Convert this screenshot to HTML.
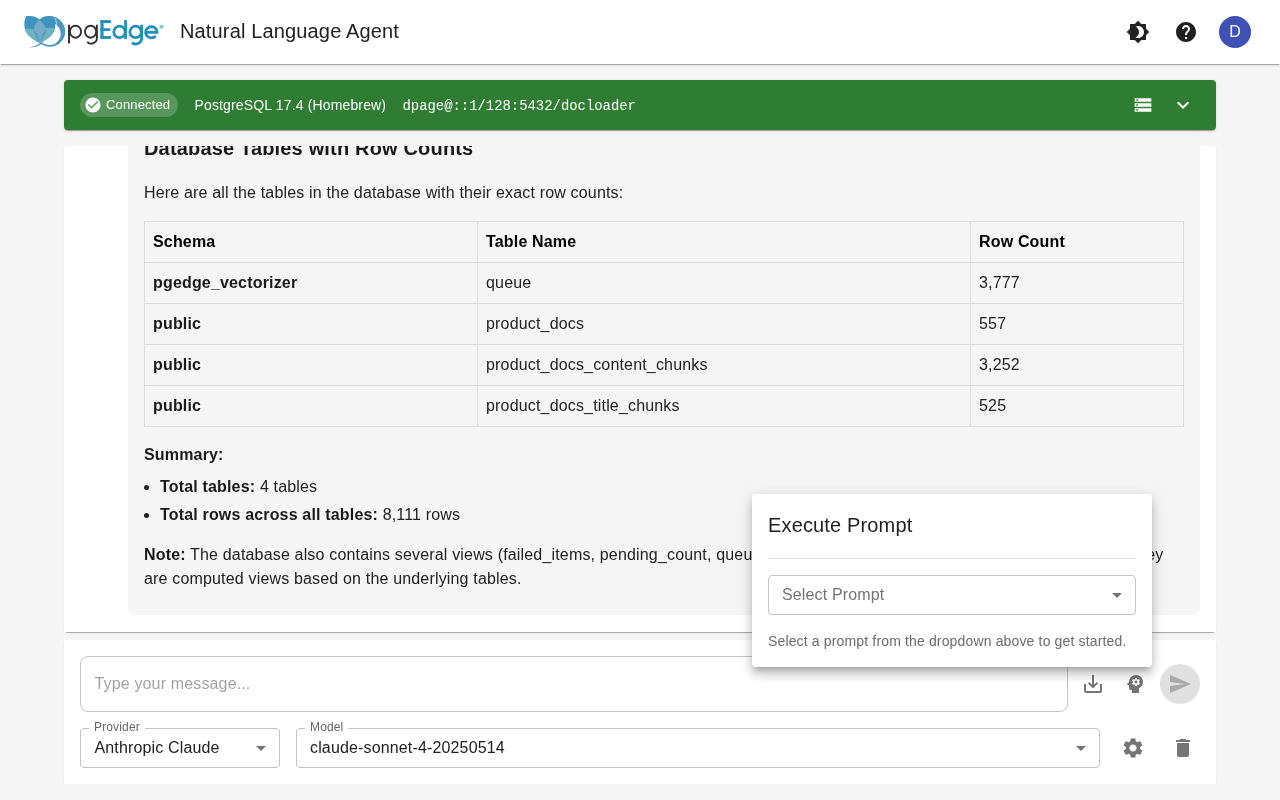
<!DOCTYPE html>
<html><head><meta charset="utf-8">
<style>
*{box-sizing:border-box;margin:0;padding:0}
html,body{width:1280px;height:800px;overflow:hidden}
body{background:#f5f5f5;font-family:"Liberation Sans",sans-serif;position:relative;color:rgba(0,0,0,0.87)}
.abs{position:absolute}
svg{display:block}
#hdr{left:0;top:0;width:1280px;height:64px;background:#fff;box-shadow:0px 2px 1px -1px rgba(0,0,0,0.17),0px 1px 1px 0px rgba(0,0,0,0.12),0px 1px 3px 0px rgba(0,0,0,0.1);z-index:5}
#title{letter-spacing:0.15px;left:180px;top:19px;font-size:20px;line-height:24px;color:#212121;white-space:nowrap}
#avatar{left:1219px;top:16px;width:32px;height:32px;border-radius:50%;background:#3f51b5;color:#fff;font-size:16px;line-height:32px;text-align:center}
#conn{left:64px;top:80px;width:1152px;height:50px;background:#2e7d32;border-radius:4px;box-shadow:0px 2px 1px -1px rgba(0,0,0,0.2),0px 1px 1px 0px rgba(0,0,0,0.14),0px 1px 3px 0px rgba(0,0,0,0.12)}
#chip{left:16px;top:13px;width:98px;height:24px;border-radius:12px;background:rgba(255,255,255,0.2)}
#chiptxt{letter-spacing:0.15px;left:26px;top:0;font-size:13px;line-height:24px;color:#fff;white-space:nowrap}
#pgver{letter-spacing:0.15px;left:130.5px;top:16px;font-size:14px;line-height:18px;color:#fff;white-space:nowrap}
#dsn{left:338.5px;top:17px;font-family:"Liberation Mono",monospace;font-size:13.9px;line-height:18px;color:#fff;white-space:nowrap}
.paper{background:#fff;border-radius:4px;box-shadow:0px 2px 1px -1px rgba(0,0,0,0.2),0px 1px 1px 0px rgba(0,0,0,0.14),0px 1px 3px 0px rgba(0,0,0,0.05)}
#chat{left:64px;top:146px;width:1152px;height:486px}
#clip{left:0;top:0;width:1152px;height:486px;overflow:hidden;background:#fff;border-radius:4px 4px 0 0}
#bubble{left:64px;top:-60px;width:1072px;height:529px;background:#f5f5f5;border-radius:8px}
.md{color:#222;font-size:16px;white-space:nowrap;letter-spacing:0.17px}
#h3{left:80px;top:-10px;font-size:20px;font-weight:bold;line-height:24px;color:#1a1a1a}
#p1{left:80px;top:34.5px;line-height:24px}
table{position:absolute;left:80px;top:75px;border-collapse:collapse;font-size:16px;color:#222;letter-spacing:0.17px;table-layout:fixed;width:1039px}
td,th{border:1px solid #dcdcdc;padding:8px 8px;height:41px;line-height:24px;text-align:left;white-space:nowrap;vertical-align:middle}
th{color:#000;font-weight:bold}
td.b{font-weight:bold;color:#1a1a1a}
#sum{left:80px;top:296.5px;line-height:24px;font-weight:bold;color:#1a1a1a}
.li{left:96px;line-height:24px}
.li b{color:#1a1a1a}
.dot{position:absolute;left:-16.5px;top:10px;width:5px;height:5px;border-radius:50%;background:#222}
#note{left:80px;top:396.5px;line-height:24px}
#input{left:64px;top:640px;width:1152px;height:144px}
#tf{left:16px;top:16px;width:988px;height:56px;border:1px solid #c4c4c4;border-radius:8px}
#ph{letter-spacing:0.15px;left:13.5px;top:17px;font-size:16px;line-height:20px;color:#a2a2a2;white-space:nowrap}
#send{left:1096px;top:24px;width:40px;height:40px;border-radius:50%;background:#e0e0e0}
.sel{border:1px solid #c4c4c4;border-radius:4px}
.lbl{letter-spacing:0.15px;font-size:12px;line-height:14px;color:#666;background:#fff;padding:0 5px;white-space:nowrap}
.val{letter-spacing:0.15px;font-size:16px;line-height:20px;color:#212121;white-space:nowrap}
#pop{left:752px;top:494px;width:400px;height:173px;background:#fff;border-radius:4px;box-shadow:0px 5px 5px -3px rgba(0,0,0,0.2),0px 8px 10px 1px rgba(0,0,0,0.14),0px 3px 14px 2px rgba(0,0,0,0.12);z-index:10}
#poptitle{letter-spacing:0.15px;left:16px;top:19px;font-size:20px;line-height:24px;color:#212121;white-space:nowrap}
#popdiv{left:16px;top:64px;width:368px;height:1px;background:#e0e0e0}
#popsel{left:16px;top:81px;width:368px;height:40px}
#popph{letter-spacing:0.15px;left:13px;top:9px;font-size:16px;line-height:20px;color:#737373;white-space:nowrap}
#helper{letter-spacing:0.15px;left:16px;top:138px;font-size:14px;line-height:18px;color:#6b6b6b;white-space:nowrap}
.gs{will-change:transform}</style></head><body><div class="gs" style="position:absolute;left:0;top:0;width:1280px;height:800px">

<div id="hdr" class="abs">
  <!-- logo mark -->
  <svg class="abs" style="left:22px;top:14px" width="48" height="36" viewBox="0 0 1067 800">
    <defs>
      <clipPath id="heart"><path d="M390 120 C320 50 180 30 95 50 C40 130 40 300 90 400 C160 520 300 600 400 650 C500 600 620 530 690 430 C750 330 760 150 700 60 C600 30 460 50 390 120 Z"/></clipPath>
      <clipPath id="rightside"><rect x="390" y="0" width="700" height="800"/></clipPath>
    </defs>
    <g clip-path="url(#rightside)">
      <path fill="#4a98c3" fill-rule="evenodd" d="M960 390 A340 340 0 1 1 280 390 A340 340 0 1 1 960 390 Z M860 440 A250 250 0 1 0 360 440 A250 250 0 1 0 860 440 Z"/>
    </g>
    <path fill="#4a98c3" d="M420 640 C330 700 250 730 160 745 C260 745 360 720 440 660 Z"/>
    <path fill="#3e94bf" d="M390 120 C320 50 180 30 95 50 C40 130 40 300 90 400 C160 520 300 600 400 650 C500 600 620 530 690 430 C750 330 760 150 700 60 C600 30 460 50 390 120 Z"/>
    <g clip-path="url(#heart)">
      <path fill="#6db5bc" d="M0 340 C120 320 220 320 300 340 C360 330 420 330 480 320 C560 300 660 300 800 330 L800 800 L0 800 Z"/>
      <path fill="#589dbc" d="M245 335 C270 450 330 570 400 650 C470 570 530 450 545 325 C480 320 420 330 400 330 C350 330 300 330 245 335 Z"/>
      <path fill="#74a9c9" d="M390 125 C330 190 260 260 265 330 C270 400 360 440 375 520 L382 640 L422 640 L430 520 C445 440 520 400 520 330 C520 260 450 190 390 125 Z"/>
    </g>
    <path fill="none" stroke="#e8f2f8" stroke-width="14" d="M720 80 C770 150 790 260 745 340"/>
  </svg>
  <!-- wordmark -->
  <svg class="abs" style="left:0;top:0" width="180" height="64" viewBox="0 0 180 64">
    <g fill="none" stroke="#2f2f2f" stroke-width="1.9">
      <path d="M69 24.8 V43.6"/>
      <ellipse cx="75.5" cy="31.7" rx="5.6" ry="6.0"/>
      <ellipse cx="90.6" cy="31.7" rx="5.6" ry="6.0"/>
      <path d="M96.9 24.8 V38 A5.6 5.6 0 0 1 87.2 41.8"/>
    </g>
    <g fill="#2290bd">
      <rect x="100.4" y="20.1" width="3.2" height="18.8"/>
      <rect x="100.4" y="20.1" width="10.5" height="3"/>
      <rect x="100.4" y="28.2" width="9.8" height="2.8"/>
      <rect x="100.4" y="36" width="10.6" height="2.9"/>
      <rect x="124.1" y="20" width="2.8" height="19"/>
    </g>
    <g fill="none" stroke="#2290bd" stroke-width="2.8">
      <circle cx="119.5" cy="31.9" r="5.7"/>
      <circle cx="135.6" cy="31.9" r="5.7"/>
      <path d="M141.6 24.7 V38.5 A5.8 5.8 0 0 1 132 42.6"/>
      <path d="M146.2 32.3 H157 A5.7 5.7 0 1 0 155.6 36"/>
    </g>
    <circle cx="161.6" cy="26.8" r="2.1" fill="#8cc3dc"/>
  </svg>
  <div id="title" class="abs">Natural Language Agent</div>
  <!-- brightness -->
  <svg class="abs" style="left:1126px;top:20px" width="24" height="24" viewBox="0 0 24 24"><path fill="#212121" d="M20 8.69V4h-4.69L12 .69 8.69 4H4v4.69L.69 12 4 15.31V20h4.69L12 23.31 15.31 20H20v-4.69L23.31 12 20 8.69zM12 18c-.89 0-1.74-.2-2.5-.55C11.56 16.5 13 14.42 13 12s-1.44-4.5-3.5-5.45C10.26 6.2 11.11 6 12 6c3.31 0 6 2.69 6 6s-2.69 6-6 6z"/></svg>
  <!-- help -->
  <svg class="abs" style="left:1174px;top:20px" width="24" height="24" viewBox="0 0 24 24"><path fill="#212121" d="M12 2C6.48 2 2 6.48 2 12s4.48 10 10 10 10-4.48 10-10S17.52 2 12 2zm1 17h-2v-2h2v2zm2.07-7.75-.9.92C13.45 12.9 13 13.5 13 15h-2v-.5c0-1.1.45-2.1 1.17-2.83l1.24-1.26c.37-.36.59-.86.59-1.41 0-1.1-.9-2-2-2s-2 .9-2 2H8c0-2.21 1.79-4 4-4s4 1.79 4 4c0 .88-.36 1.68-.93 2.25z"/></svg>
  <div id="avatar" class="abs">D</div>
</div>

<div id="conn" class="abs">
  <div id="chip" class="abs">
    <svg class="abs" style="left:4px;top:3px" width="18" height="18" viewBox="0 0 24 24"><path fill="#fff" d="M12 2C6.48 2 2 6.48 2 12s4.48 10 10 10 10-4.48 10-10S17.52 2 12 2zm-2 15-5-5 1.41-1.41L10 14.17l7.59-7.59L19 8l-9 9z"/></svg>
    <div id="chiptxt" class="abs">Connected</div>
  </div>
  <div id="pgver" class="abs">PostgreSQL 17.4 (Homebrew)</div>
  <div id="dsn" class="abs">dpage@::1/128:5432/docloader</div>
  <svg class="abs" style="left:1069px;top:15px" width="20" height="20" viewBox="0 0 24 24"><path fill="#fff" d="M2 20h20v-4H2v4zm2-3h2v2H4v-2zM2 4v4h20V4H2zm4 3H4V5h2v2zm-4 7h20v-4H2v4zm2-3h2v2H4v-2z"/></svg>
  <svg class="abs" style="left:1107px;top:13px" width="24" height="24" viewBox="0 0 24 24"><path fill="#fff" d="M16.59 8.59 12 13.17 7.41 8.59 6 10l6 6 6-6z"/></svg>
</div>

<div id="chat" class="abs paper"><div id="clip" class="abs">
  <div id="bubble" class="abs"></div>
  <div id="h3" class="abs md">Database Tables with Row Counts</div>
  <div id="p1" class="abs md">Here are all the tables in the database with their exact row counts:</div>
  <table>
    <colgroup><col style="width:333px"><col style="width:493px"><col style="width:213px"></colgroup>
    <tr><th>Schema</th><th>Table Name</th><th>Row Count</th></tr>
    <tr><td class="b">pgedge_vectorizer</td><td>queue</td><td>3,777</td></tr>
    <tr><td class="b">public</td><td>product_docs</td><td>557</td></tr>
    <tr><td class="b">public</td><td>product_docs_content_chunks</td><td>3,252</td></tr>
    <tr><td class="b">public</td><td>product_docs_title_chunks</td><td>525</td></tr>
  </table>
  <div id="sum" class="abs md">Summary:</div>
  <div class="abs md li" style="top:329px"><span class="dot"></span><b>Total tables:</b> 4 tables</div>
  <div class="abs md li" style="top:357px"><span class="dot"></span><b>Total rows across all tables:</b> 8,111 rows</div>
  <div id="note" class="abs md"><b style="color:#1a1a1a">Note:</b> The database also contains several views (failed_items, pending_count, queue_status) that are not included in the totals because they<br>are computed views based on the underlying tables.</div>
</div></div>

<div id="input" class="abs paper">
  <div class="abs" style="left:0;top:0;width:1152px;height:144px;background:#fff"></div>
  <div id="tf" class="abs"><div id="ph" class="abs">Type your message...</div></div>
  <svg class="abs" style="left:1017px;top:32px" width="24" height="24" viewBox="0 0 24 24"><path fill="#757575" d="M19 12v7H5v-7H3v7c0 1.1.9 2 2 2h14c1.1 0 2-.9 2-2v-7h-2zm-6 .67 2.59-2.58L17 11.5l-5 5-5-5 1.41-1.41L11 12.67V3h2z"/></svg>
  <svg class="abs" style="left:1059px;top:32px" width="24" height="24" viewBox="0 0 24 24"><path fill="#757575" d="M13 8.57c-.79 0-1.43.64-1.43 1.43s.64 1.43 1.43 1.43 1.43-.64 1.43-1.43-.64-1.43-1.43-1.43z"/><path fill="#757575" d="M13 3C9.25 3 6.19 5.95 6.02 9.66L4.1 12.22c-.25.33-.01.78.4.78H6v3c0 1.1.9 2 2 2h1v3h7v-4.68c2.36-1.12 4-3.53 4-6.32 0-3.87-3.13-7-7-7zm3 7c0 .13-.01.26-.02.39l.83.66c.08.06.1.16.05.25l-.8 1.39c-.05.09-.16.12-.24.09l-.99-.4c-.21.16-.43.29-.67.39L14 13.83c-.01.1-.1.17-.2.17h-1.6c-.1 0-.18-.07-.2-.17l-.15-1.06c-.25-.1-.47-.23-.68-.39l-.99.4c-.09.03-.2 0-.25-.09l-.8-1.39c-.05-.08-.03-.19.05-.25l.84-.66c-.01-.13-.02-.26-.02-.39s.02-.27.04-.39l-.85-.66c-.08-.06-.1-.16-.05-.26l.8-1.38c.05-.09.15-.12.24-.09l1 .4c.2-.15.43-.29.67-.39L12 6.17c.02-.1.1-.17.2-.17h1.6c.1 0 .18.07.2.17l.15 1.06c.24.1.46.23.67.39l1-.4c.09-.03.2 0 .24.09l.8 1.38c.05.09.03.2-.05.26l-.85.66c.03.12.04.25.04.39z"/></svg>
  <div id="send" class="abs">
    <svg class="abs" style="left:8px;top:8px" width="24" height="24" viewBox="0 0 24 24"><path fill="#a9a9a9" d="M2.01 21 23 12 2.01 3 2 10l15 2-15 2z"/></svg>
  </div>
  <!-- provider -->
  <div class="abs sel" style="left:16px;top:88px;width:200px;height:40px">
    <div class="abs val" style="left:13.5px;top:9px">Anthropic Claude</div>
    <svg class="abs" style="left:168px;top:7px" width="24" height="24" viewBox="0 0 24 24"><path fill="#757575" d="M7 10l5 5 5-5z"/></svg>
  </div>
  <div class="abs lbl" style="left:25px;top:80px">Provider</div>
  <!-- model -->
  <div class="abs sel" style="left:232px;top:88px;width:804px;height:40px">
    <div class="abs val" style="left:13px;top:9px">claude-sonnet-4-20250514</div>
    <svg class="abs" style="left:772px;top:7px" width="24" height="24" viewBox="0 0 24 24"><path fill="#757575" d="M7 10l5 5 5-5z"/></svg>
  </div>
  <div class="abs lbl" style="left:241px;top:80px">Model</div>
  <svg class="abs" style="left:1057px;top:96px" width="24" height="24" viewBox="0 0 24 24"><path fill="#757575" d="M19.14 12.94c.04-.3.06-.61.06-.94 0-.32-.02-.64-.07-.94l2.03-1.58c.18-.14.23-.41.12-.61l-1.92-3.32c-.12-.22-.37-.29-.59-.22l-2.39.96c-.5-.38-1.03-.7-1.62-.94l-.36-2.54c-.04-.24-.24-.41-.48-.41h-3.84c-.24 0-.43.17-.47.41l-.36 2.54c-.59.24-1.13.57-1.62.94l-2.39-.96c-.22-.08-.47 0-.59.22L2.74 8.87c-.12.21-.08.47.12.61l2.03 1.58c-.05.3-.09.63-.09.94s.02.64.07.94l-2.03 1.58c-.18.14-.23.41-.12.61l1.92 3.32c.12.22.37.29.59.22l2.39-.96c.5.38 1.03.7 1.62.94l.36 2.54c.05.24.24.41.48.41h3.84c.24 0 .44-.17.47-.41l.36-2.54c.59-.24 1.13-.56 1.62-.94l2.39.96c.22.08.47 0 .59-.22l1.92-3.32c.12-.22.07-.47-.12-.61l-2.01-1.58zM12 15.6c-1.98 0-3.6-1.62-3.6-3.6s1.62-3.6 3.6-3.6 3.6 1.62 3.6 3.6-1.62 3.6-3.6 3.6z"/></svg>
  <svg class="abs" style="left:1107px;top:96px" width="24" height="24" viewBox="0 0 24 24"><path fill="#757575" d="M6 19c0 1.1.9 2 2 2h8c1.1 0 2-.9 2-2V7H6v12zM19 4h-3.5l-1-1h-5l-1 1H5v2h14V4z"/></svg>
</div>

<div class="abs" style="left:0;top:784px;width:1280px;height:16px;background:#f5f5f5;z-index:4"></div>
<div id="pop" class="abs">
  <div id="poptitle" class="abs">Execute Prompt</div>
  <div id="popdiv" class="abs"></div>
  <div id="popsel" class="abs sel">
    <div id="popph" class="abs">Select Prompt</div>
    <svg class="abs" style="left:336px;top:7px" width="24" height="24" viewBox="0 0 24 24"><path fill="#757575" d="M7 10l5 5 5-5z"/></svg>
  </div>
  <div id="helper" class="abs">Select a prompt from the dropdown above to get started.</div>
</div>

</div></body></html>
